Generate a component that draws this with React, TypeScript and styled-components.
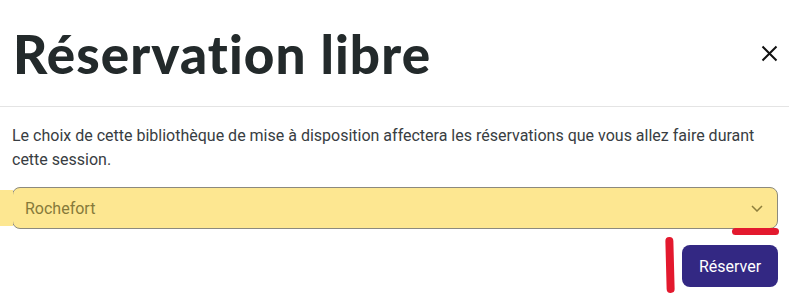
import styled, { createGlobalStyle } from 'styled-components'

const GlobalStyle = createGlobalStyle`
  html, body {
    margin: 0;
    padding: 0;
    background: #ffffff;
  }
  body {
    font-family: Roboto, "Liberation Sans", sans-serif;
    color: #374151;
  }
`

const Modal = styled.div`
  width: 789px;
  background: #ffffff;
`

const Header = styled.header`
  height: 106px;
  display: flex;
  align-items: center;
  justify-content: space-between;
  padding: 0 11px 0 13px;
  border-bottom: 1px solid #e4e4e4;
`

const Title = styled.h1`
  margin: 0;
  font-family: Lato, "Noto Sans", sans-serif;
  font-weight: 900;
  font-size: 53px;
  line-height: 1;
  color: #232a2b;
  letter-spacing: 1.1px;
`

const CloseButton = styled.button`
  width: 18px;
  height: 18px;
  padding: 0;
  border: none;
  background: transparent;
  display: flex;
  align-items: center;
  justify-content: center;
  cursor: pointer;
`

const Body = styled.div`
  padding: 17px 11px 16px 12px;
  display: flex;
  flex-direction: column;
`

const Intro = styled.p`
  margin: 0 0 15px;
  font-size: 16px;
  line-height: 24px;
  color: #383d42;
`

const SelectRow = styled.div`
  position: relative;
  height: 42px;
  box-sizing: border-box;
  border: 1px solid #8c8a7e;
  border-radius: 8px;
  background: #fde791;
  display: flex;
  align-items: center;
  justify-content: space-between;
  padding: 0 14px 0 12px;

  &::before {
    content: '';
    position: absolute;
    left: -13px;
    top: 2px;
    bottom: 2px;
    width: 13px;
    background: #fde791;
  }
`

const SelectValue = styled.span`
  font-size: 16px;
  color: #867a3a;
`

const Mark = styled.span<{ $w: number; $h: number; $tilt?: number }>`
  position: absolute;
  width: ${(p) => p.$w}px;
  height: ${(p) => p.$h}px;
  background: #e3192e;
  border-radius: 4px;
  transform: rotate(${(p) => p.$tilt ?? 0}deg);
`

const UnderMark = styled(Mark)`
  right: -2px;
  top: 40px;
`

const SideMark = styled(Mark)`
  left: 654px;
  top: -8px;
`

const Footer = styled.div`
  position: relative;
  display: flex;
  justify-content: flex-end;
  margin-top: 16px;
`

const PrimaryButton = styled.button`
  width: 96px;
  height: 42px;
  border: none;
  border-radius: 8px;
  background: #332883;
  color: #ffffff;
  font-family: Roboto, "Liberation Sans", sans-serif;
  font-size: 16px;
  cursor: pointer;
`

export default function App() {
  return (
    <>
      <GlobalStyle />
      <Modal>
        <Header>
          <Title>Réservation libre</Title>
          <CloseButton aria-label="Fermer">
            <svg width="17" height="17" viewBox="0 0 17 17" fill="none">
              <path d="M1.5 1.5 L15.5 15.5 M15.5 1.5 L1.5 15.5" stroke="#111" strokeWidth="2" />
            </svg>
          </CloseButton>
        </Header>
        <Body>
          <Intro>
            Le choix de cette bibliothèque de mise à disposition affectera les réservations que vous allez faire durant
            cette session.
          </Intro>
          <SelectRow>
            <SelectValue>Rochefort</SelectValue>
            <svg width="12" height="7" viewBox="0 0 12 7" fill="none">
              <path d="M1 1 L6 6 L11 1" stroke="#8e7f3c" strokeWidth="1.5" />
            </svg>
            <UnderMark $w={47} $h={7} />
          </SelectRow>
          <Footer>
            <SideMark $w={8} $h={56} $tilt={-1.5} />
            <PrimaryButton>Réserver</PrimaryButton>
          </Footer>
        </Body>
      </Modal>
    </>
  )
}
